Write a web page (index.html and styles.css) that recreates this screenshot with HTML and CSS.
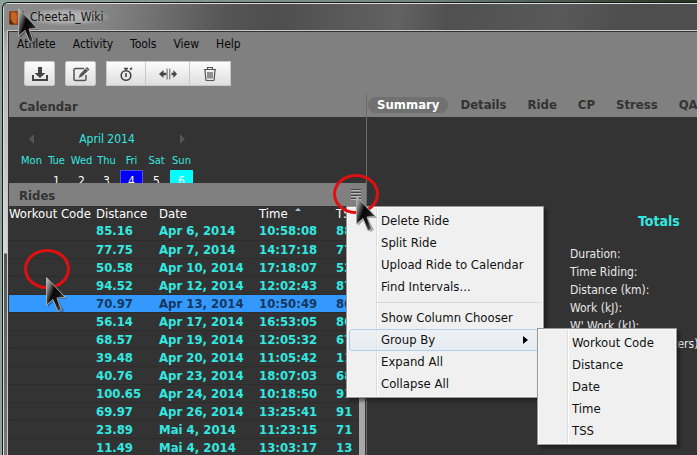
FILE: index.html
```html
<!DOCTYPE html>
<html lang="en">
<head>
<meta charset="utf-8">
<title>Cheetah_Wiki</title>
<link rel="stylesheet" href="styles.css">
</head>
<body>
<svg class="defs" aria-hidden="true">
  <defs>
    <linearGradient id="arrow-fill" x1="0" y1="0" x2="1" y2="0.6">
      <stop offset="0" stop-color="#c8c8c8"/><stop offset=".22" stop-color="#777"/><stop offset=".45" stop-color="#080808"/><stop offset=".7" stop-color="#111"/><stop offset="1" stop-color="#555"/>
    </linearGradient>
    <symbol id="arrow" viewBox="0 0 26 40">
      <path d="M3 3V31L9 25L15 37L19 35L13 23H22Z" fill="#000" opacity=".3"/>
      <path d="M1.500 1.500V29L8 23.500L13 35.500L16.500 34L12 22L20.500 21.500Z" fill="url(#arrow-fill)" stroke="#aaa" stroke-width="1"/>
    </symbol>
  </defs>
</svg>
<div class="window">
  <header class="titlebar">
    <svg class="app-icon" viewBox="0 0 16 16" aria-hidden="true"><rect width="16" height="15" y="1" rx="2" fill="#8c421c"/><path d="M2 3L6 2L9 6L8 14H3Z" fill="#c9641f"/><path d="M9 2L15 3V10L11 13Z" fill="#d99a68"/><path d="M1 9L5 15H1Z" fill="#4b2a1a"/></svg>
    <span class="title">Cheetah_Wiki</span>
  </header>
  <div class="client">
    <nav class="menubar">
      <button>Athlete</button><button>Activity</button><button>Tools</button><button>View</button><button>Help</button>
    </nav>
    <div class="toolbar">
      <button class="tool" aria-label="Download"><svg viewBox="0 0 18 18"><path d="M7 2h4v6h3.500L9 13 3.500 8H7z" fill="#444"/><path d="M2 10v5h14v-5" fill="none" stroke="#444" stroke-width="2"/></svg></button>
      <button class="tool" aria-label="Edit"><svg viewBox="0 0 18 18"><path d="M12 3.500H3.500Q2 3.500 2 5v9q0 1.500 1.500 1.500h9q1.500 0 1.500-1.500v-4" fill="none" stroke="#555" stroke-width="1.500"/><path d="M15 2l2.500 2.500-7.500 7L6.500 13l1.500-4z" fill="#555"/><path d="M14 3.500l2 2" stroke="#ddd"/></svg></button>
      <div class="tool-group">
        <button class="tool" aria-label="Interval"><svg viewBox="0 0 18 18"><circle cx="9" cy="10.500" r="4.800" fill="none" stroke="#444" stroke-width="1.600"/><path d="M9 8v4M7 3.500h4M9 3v3M13 4.500l2-1.500" stroke="#444" stroke-width="1.600"/></svg></button>
        <button class="tool" aria-label="Split"><svg viewBox="0 0 20 18"><path d="M9 3v12M12 3v12" stroke="#555"/><path d="M0 9l5-4.500v3h3v3H5v3zM20 9l-4-4.500v3h-2v3h2v3z" fill="#444"/></svg></button>
        <button class="tool" aria-label="Delete"><svg viewBox="0 0 18 18"><path d="M3 4.500h12M6.500 4V2.500h5V4M4 5l.8 9.500q0 1 1 1h6.400q1 0 1-1L14 5M7 7v6.500M9 7v6.500M11 7v6.500" fill="none" stroke="#555" stroke-width="1.200"/></svg></button>
      </div>
    </div>
    <div class="split">
      <aside class="sidebar">
        <h2 class="heading">Calendar</h2>
        <section class="calendar">
          <div class="month"><button class="prev" aria-label="Previous month"></button><span>April 2014</span><button class="next" aria-label="Next month"></button></div>
          <table class="days">
            <thead><tr><th>Mon</th><th>Tue</th><th>Wed</th><th>Thu</th><th>Fri</th><th>Sat</th><th>Sun</th></tr></thead>
            <tbody><tr><td></td><td>1</td><td>2</td><td>3</td><td><span class="today">4</span></td><td>5</td><td><span class="ride-day">6</span></td></tr></tbody>
          </table>
        </section>
        <div class="heading rides-heading"><h2>Rides</h2><button class="list-menu" aria-label="Rides menu"><i></i><i></i><i></i><i></i></button></div>
        <div class="rides-area">
          <table class="rides">
            <thead><tr><th class="code">Workout Code</th><th class="dist">Distance</th><th class="date">Date</th><th class="time">Time<span class="sort"></span></th><th>TSS</th></tr></thead>
            <tbody>
              <tr><td></td><td>85.16</td><td>Apr 6, 2014</td><td>10:58:08</td><td>88</td></tr>
              <tr><td></td><td>77.75</td><td>Apr 7, 2014</td><td>14:17:18</td><td>77</td></tr>
              <tr><td></td><td>50.58</td><td>Apr 10, 2014</td><td>17:18:07</td><td>52</td></tr>
              <tr><td></td><td>94.52</td><td>Apr 12, 2014</td><td>12:02:43</td><td>87</td></tr>
              <tr class="selected"><td></td><td>70.97</td><td>Apr 13, 2014</td><td>10:50:49</td><td>80</td></tr>
              <tr><td></td><td>56.14</td><td>Apr 17, 2014</td><td>16:53:05</td><td>80</td></tr>
              <tr><td></td><td>68.57</td><td>Apr 19, 2014</td><td>12:05:32</td><td>67</td></tr>
              <tr><td></td><td>39.48</td><td>Apr 20, 2014</td><td>11:05:42</td><td>11</td></tr>
              <tr><td></td><td>40.76</td><td>Apr 23, 2014</td><td>18:07:03</td><td>68</td></tr>
              <tr><td></td><td>100.65</td><td>Apr 24, 2014</td><td>10:18:50</td><td>91</td></tr>
              <tr><td></td><td>69.97</td><td>Apr 26, 2014</td><td>13:25:41</td><td>91</td></tr>
              <tr><td></td><td>23.89</td><td>Mai 4, 2014</td><td>11:23:15</td><td>71</td></tr>
              <tr><td></td><td>11.49</td><td>Mai 4, 2014</td><td>13:03:17</td><td>13</td></tr>
            </tbody>
          </table>
          <div class="scrollbar"></div>
        </div>
      </aside>
      <main class="content">
        <nav class="tabs">
          <button class="active">Summary</button><button>Details</button><button>Ride</button><button>CP</button><button>Stress</button><button>QA</button>
        </nav>
        <section class="summary">
          <h3>Totals</h3>
          <ul><li>Duration:</li><li>Time Riding:</li><li>Distance (km):</li><li>Work (kJ):</li><li>W' Work (kJ):</li><li>Elevation Gain (meters):</li></ul>
        </section>
      </main>
    </div>
  </div>
</div>

<div class="popup ride-menu">
  <button>Delete Ride</button><button>Split Ride</button><button>Upload Ride to Calendar</button><button>Find Intervals...</button>
  <hr>
  <button>Show Column Chooser</button><button class="open">Group By</button><button>Expand All</button><button>Collapse All</button>
</div>
<div class="popup group-menu">
  <button>Workout Code</button><button>Distance</button><button>Date</button><button>Time</button><button>TSS</button>
</div>

<div class="ring ring-row"></div>
<div class="ring ring-menu"></div>
<svg class="cursor cursor-title" aria-hidden="true"><use href="#arrow"/></svg>
<svg class="cursor cursor-row" aria-hidden="true"><use href="#arrow"/></svg>
<svg class="cursor cursor-menu" aria-hidden="true"><use href="#arrow"/></svg>
</body>
</html>
```
FILE: styles.css
```css
* { box-sizing: border-box; }
html, body { height: 100%; }
body {
  margin: 0;
  padding: 2px 0 0 2px;
  overflow: hidden;
  position: relative;
  background: linear-gradient(90deg, #8fa39c, #74857f 60%, #26331f);
  font: 12px/18px "DejaVu Sans Condensed", "DejaVu Sans", sans-serif;
}
button { margin: 0; padding: 0; border: 0; background: none; font: inherit; color: inherit; text-align: left; }
h2, h3, ul { margin: 0; padding: 0; font-size: 13px; }
table { border-collapse: collapse; table-layout: fixed; }
th, td { padding: 0; text-align: left; white-space: nowrap; }
.defs { position: absolute; width: 0; height: 0; }

.window {
  height: 100%;
  display: flex;
  flex-direction: column;
  padding-left: 5px;
  border: solid #10181a;
  border-width: 1px 0 0 1px;
  border-top-left-radius: 6px;
  box-shadow: inset 1px 1px 0 #ddd;
  background: linear-gradient(180deg, #777 0, #b5b5b5 50px, #d5d5d5 250px, #555 251px, #777 100%);
  overflow: hidden;
}
.titlebar {
  flex: none;
  height: 27px;
  margin: 1px 0 0 -4px;
  padding: 0 0 1px 5px;
  display: flex;
  align-items: center;
  gap: 6px;
  background: linear-gradient(100deg, #8c8c8c 0, #858585 100px, #555 220px, #4e4e4e 270px, #626262 390px, #505050 440px, #595959 550px, #4e4e4e 610px);
}
.app-icon { width: 15px; height: 15px; }
.title { margin-left: -8px; padding: 0 8px; color: #111; background: radial-gradient(closest-side, #bbb, #aaa 60%, transparent); }
.client {
  flex: 1;
  min-height: 0;
  display: flex;
  flex-direction: column;
  border: solid #333;
  border-width: 1px 0 0 1px;
  box-shadow: 0 0 0 1px #c9c9c9;
  background: #808080;
}
.menubar { flex: none; display: flex; gap: 17px; padding: 3px 8px; height: 24px; color: #080808; }
.toolbar { flex: none; display: flex; gap: 10px; padding: 5px 15px 8px; height: 38px; }
.tool {
  width: 31px;
  height: 25px;
  display: grid;
  place-items: center;
  border: 1px solid #c8c8c8;
  border-radius: 2px;
  background: linear-gradient(#fcfcfc, #dedede);
}
.tool svg { width: 18px; height: 18px; }
.tool-group { display: grid; grid-template-columns: 40px 44px 41px; }
.tool-group .tool { width: auto; border-radius: 0; }
.tool-group .tool + .tool { border-left: 0; }

.split { flex: 1; min-height: 0; display: grid; grid-template-columns: 358px 1fr; }
.sidebar { min-width: 0; min-height: 0; display: flex; flex-direction: column; border-right: 1px solid #6c6c6c; }
.heading { flex: none; height: 23px; padding: 4px 10px 0; line-height: 18px; color: #333; background: #808080; }
.calendar { flex: none; height: 66px; overflow: hidden; background: #333; color: #33e8e0; }
.month { display: flex; align-items: center; justify-content: space-between; width: 156px; margin: 13px 0 5px 20px; }
.prev, .next { border: solid transparent; border-width: 5px 0; }
.prev { border-right: 5px solid #555; }
.next { border-left: 5px solid #555; }
.days { width: 175px; margin-left: 10px; line-height: 16px; }
.days th { font-weight: normal; font-size: 11px; text-align: center; }
.days td { text-align: center; color: #fff; line-height: 24px; }
.days td span { display: block; margin: 1px 1px 0; line-height: 21px; }
.today { background: #0000f8; border: 1px solid #5050e0; }
.ride-day { background: #00ffff; border: 1px solid #00ffff; }
.rides-heading { display: flex; justify-content: space-between; }
.list-menu { width: 10px; height: 14px; display: flex; flex-direction: column; gap: 1px; margin: 2px -5px 0 0; }
.list-menu i { width: 10px; height: 2px; background: #444; border-bottom: 1px solid #bbb; }
.rides-area { flex: 1; min-height: 0; overflow: hidden; display: flex; background: #333; }
.rides { flex: 1; align-self: flex-start; }
.rides th { height: 16px; line-height: 16px; font-weight: normal; font-size: 13px; color: #fff; }
.rides td { height: 18px; line-height: 17px; font-size: 13px; font-weight: bold; color: #33e8e0; border-bottom: 1px solid #2c2c2c; }
.rides .code { width: 87px; }
.rides .dist { width: 63px; }
.rides .date { width: 100px; }
.rides .time { width: 77px; }
.sort { display: inline-block; vertical-align: top; margin: 2px 0 0 7px; border: solid transparent; border-width: 0 3px 3px; border-bottom-color: #a8c8e8; }
.rides .selected { background: #3399ff; }
.rides .selected td { color: #17365c; }
.scrollbar { width: 6px; margin-right: 1px; background: #a8a8a8; }

.content { min-width: 0; display: flex; flex-direction: column; background: #333; }
.tabs { flex: none; height: 23px; display: flex; gap: 21px; padding: 3px 10px 0; background: #808080; font-weight: bold; font-size: 13px; color: #333; overflow: hidden; }
.tabs button { height: 16px; line-height: 16px; white-space: nowrap; }
.tabs .active { margin: 0 -9px; padding: 0 9px; border-radius: 8px; background: #707070; color: #fff; }
.summary { width: 127px; margin-left: auto; padding-top: 95px; color: #e8e8e8; }
.summary h3 { padding-left: 68px; margin-bottom: 15px; font-size: 14px; color: #33e8e0; }
.summary ul { list-style: none; font-size: 12px; white-space: nowrap; }

.popup {
  position: absolute;
  padding: 3px 2px 2px;
  display: flex;
  flex-direction: column;
  font-size: 13px;
  color: #111;
  border: 1px solid #979797;
  box-shadow: inset 0 0 0 1px #f8f8f8, 3px 3px 3px #1118;
  background: linear-gradient(90deg, transparent 29px, #ddd 29px, #ddd 30px, #fff 30px, #fff 31px, transparent 31px) #f0f0f0;
}
.popup button { height: 22px; padding-left: 32px; line-height: 22px; }
.popup hr { width: auto; margin: 4px 0 4px 28px; border: 0; height: 1px; background: #d8d8d8; }
.popup .open { display: flex; justify-content: space-between; align-items: center; padding: 0 12px 0 31px; border: 1px solid #aecff0; border-radius: 3px; background: linear-gradient(#edf1f680, #dde8f580); }
.open::after { content: ""; border: solid transparent; border-width: 4px 0 4px 5px; border-left-color: #000; }
.ride-menu { left: 346px; top: 206px; width: 198px; }
.group-menu { left: 537px; top: 328px; width: 140px; }
.ring { position: absolute; width: 46px; height: 40px; border: 3px solid #e01010; border-radius: 50%; }
.ring-row { left: 24px; top: 249px; }
.ring-menu { left: 333px; top: 174px; }
.cursor { position: absolute; width: 26px; height: 40px; }
.cursor-title { left: 17px; top: 7px; }
.cursor-row { left: 45px; top: 276px; }
.cursor-menu { left: 355px; top: 195px; }
```
